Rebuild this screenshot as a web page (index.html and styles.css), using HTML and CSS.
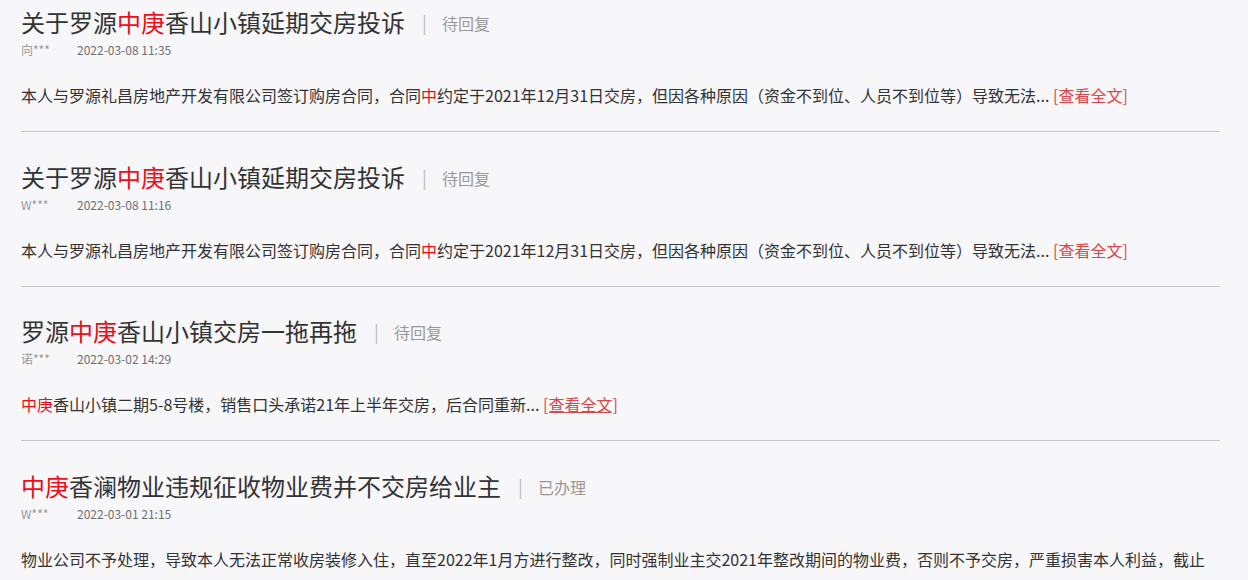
FILE: index.html
```html
<!DOCTYPE html>
<html lang="zh-CN">
<head>
    <meta charset="UTF-8">
    <meta name="viewport" content="width=device-width, initial-scale=1.0">
    <title>投诉列表</title>
    <link rel="stylesheet" href="styles.css">
</head>
<body>
    <div class="list">
        <div class="item">
            <h3 class="title">关于罗源<em>中庚</em>香山小镇延期交房投诉<span class="bar">|</span><span class="status">待回复</span></h3>
            <div class="meta"><span class="user">向***</span><span class="date">2022-03-08 11:35</span></div>
            <p class="content">本人与罗源礼昌房地产开发有限公司签订购房合同，合同<em>中</em>约定于2021年12月31日交房，但因各种原因（资金不到位、人员不到位等）导致无法... <a href="#" class="more">[查看全文]</a></p>
        </div>
        <div class="item">
            <h3 class="title">关于罗源<em>中庚</em>香山小镇延期交房投诉<span class="bar">|</span><span class="status">待回复</span></h3>
            <div class="meta"><span class="user">W***</span><span class="date">2022-03-08 11:16</span></div>
            <p class="content">本人与罗源礼昌房地产开发有限公司签订购房合同，合同<em>中</em>约定于2021年12月31日交房，但因各种原因（资金不到位、人员不到位等）导致无法... <a href="#" class="more">[查看全文]</a></p>
        </div>
        <div class="item">
            <h3 class="title">罗源<em>中庚</em>香山小镇交房一拖再拖<span class="bar">|</span><span class="status">待回复</span></h3>
            <div class="meta"><span class="user">诺***</span><span class="date">2022-03-02 14:29</span></div>
            <p class="content"><em>中庚</em>香山小镇二期5-8号楼，销售口头承诺21年上半年交房，后合同重新... <a href="#" class="more hover">[查看全文]</a></p>
        </div>
        <div class="item">
            <h3 class="title"><em>中庚</em>香澜物业违规征收物业费并不交房给业主<span class="bar">|</span><span class="status">已办理</span></h3>
            <div class="meta"><span class="user">W***</span><span class="date">2022-03-01 21:15</span></div>
            <p class="content">物业公司不予处理，导致本人无法正常收房装修入住，直至2022年1月方进行整改，同时强制业主交2021年整改期间的物业费，否则不予交房，严重损害本人利益，截止2022年3月仍未交房，且物业费仍在收取... <a href="#" class="more">[查看全文]</a></p>
        </div>
    </div>
</body>
</html>
```

FILE: styles.css
```css
/* Reset */
* {
    margin: 0;
    padding: 0;
    box-sizing: border-box;
}

body {
    font-family: "Noto Sans CJK SC", "Open Sans", sans-serif;
    background-color: #f7f6f9;
    color: #333;
}

em {
    font-style: normal;
    color: #e8101a;
}

/* List */
.list {
    width: 1220px;
    padding: 4px 0 0 21px;
}

.item {
    border-bottom: 1px solid #c8c8c8;
    margin-bottom: 26.5px;
}

.title {
    height: 36px;
    font-size: 24px;
    font-weight: normal;
    line-height: 36px;
    color: #333;
    white-space: nowrap;
}

.bar {
    font-size: 18px;
    color: #bbb;
    margin: 0 15px 0 17px;
    vertical-align: 2px;
}

.status {
    font-size: 16px;
    color: #999;
    vertical-align: 2px;
}

.meta {
    height: 20px;
    font-size: 12px;
    line-height: 20px;
}

.user {
    display: inline-block;
    width: 56px;
    color: #999;
}

.date {
    color: #6f6f6f;
}

.content {
    font-size: 16px;
    line-height: 32px;
    margin: 19px 0 20px;
    color: #333;
}

.more {
    color: #d9464a;
    text-decoration: none;
}

.more.hover,
.more:hover {
    text-decoration: underline;
}
```
